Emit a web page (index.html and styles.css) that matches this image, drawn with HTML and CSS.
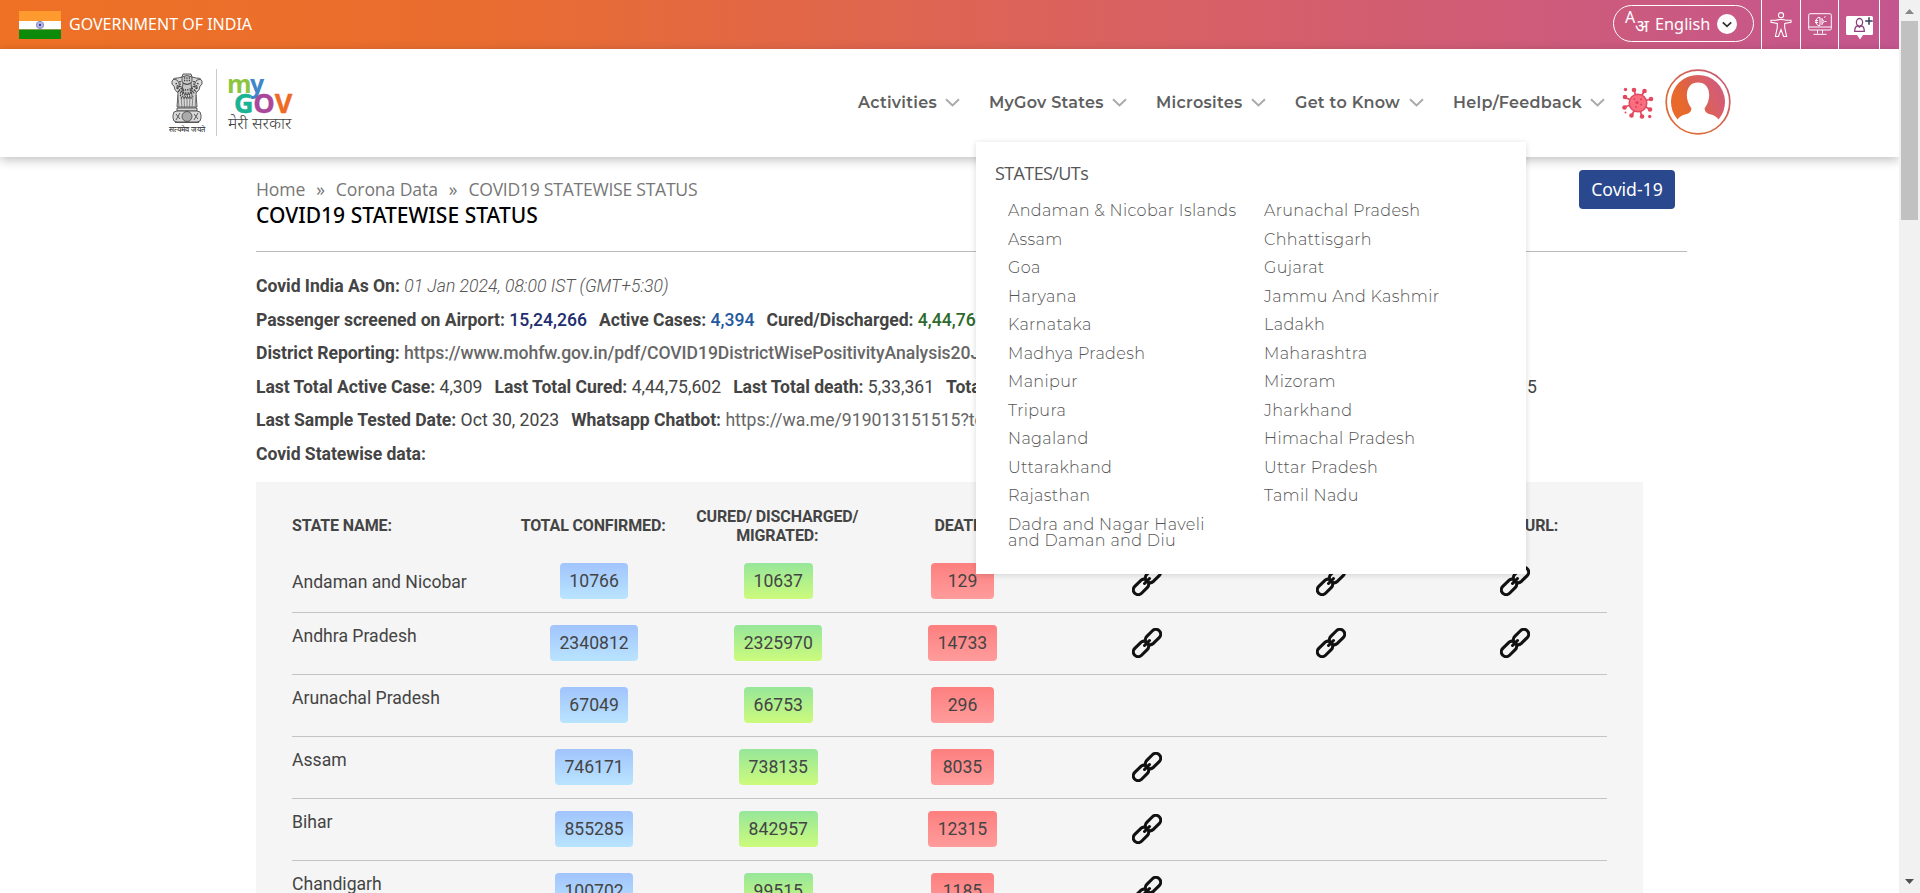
FILE: index.html
```html
<!DOCTYPE html>
<html lang="en">
<head>
<meta charset="utf-8">
<title>COVID19 Statewise Status | MyGov.in</title>
<link rel="stylesheet" href="styles.css">
</head>
<body>
<svg class="defs" aria-hidden="true">
  <defs>
    <linearGradient id="brand" x1="0" y1="0.6" x2="1" y2="0.2"><stop offset="0.15" stop-color="#e8692b"/><stop offset="0.4" stop-color="#dc6148"/><stop offset="0.65" stop-color="#d95f66"/><stop offset="1" stop-color="#cf5a7e"/></linearGradient>
    <linearGradient id="ring" x1="0" y1="1" x2="1" y2="0"><stop offset="0.3" stop-color="#dd6b38"/><stop offset="1" stop-color="#c1567c"/></linearGradient>
  </defs>
  <symbol id="chev" viewBox="0 0 15 9"><path d="M1 1.2l6.5 6.2L14 1.2" fill="none" stroke="#aaa" stroke-width="2"/></symbol>
  <symbol id="link" viewBox="0 0 30 30">
    <g fill="none" stroke="#111" stroke-width="3.100" stroke-linecap="round" transform="rotate(-45 15 15)">
      <path d="M14.200 18.200 Q12.800 19.800 10.500 19.800 H2.500 A4.800 4.800 0 0 1 2.500 10.200 H10.500 Q15.300 10.600 15.300 15 L11.500 15"/>
      <path d="M15.800 11.800 Q17.200 10.200 19.500 10.200 H27.500 A4.800 4.800 0 0 1 27.500 19.800 H19.500 Q14.700 19.400 14.700 15 L18.500 15"/>
    </g>
  </symbol>
</svg>
<div class="window">
  <div class="page">
    <div class="topbar">
      <svg class="flag" viewBox="0 0 42 28" preserveAspectRatio="none"><path fill="#ff9a2e" d="M0 0h42v10H0z"/><path fill="#fff" d="M0 10h42v8.500H0z"/><path fill="#0d8a0a" d="M0 18.500h42V28H0z"/><circle cx="21" cy="14" r="3.600" fill="#b9b9e4" stroke="#8585c8"/><circle cx="21" cy="14" r="1.200" fill="#3c3c9c"/></svg>
      <span class="gov">GOVERNMENT OF INDIA</span>
      <div class="tools">
        <div class="lang"><span class="lang-a">A</span><span class="lang-h">अ</span><span class="lang-t">English</span>
          <svg class="lang-c" viewBox="0 0 20 20"><circle cx="10" cy="10" r="10" fill="#fff"/><path d="M5.800 8.300l4.200 4 4.200-4" fill="none" stroke="#333" stroke-width="1.800"/></svg></div>
        <div class="tool t1"><svg width="22" height="26" viewBox="0 0 22 26" fill="none" stroke="#fff" stroke-width="1.100"><circle cx="11" cy="3.200" r="2.600"/><path d="M1 8.300h4.500q5.500-1.500 11 0H21v1.900l-6.300 1.300v4l1.900 9h-3L11 17.500l-2.600 7h-3l1.900-9v-4L1 10.200z"/></svg></div>
        <div class="tool t2"><svg width="24" height="23" viewBox="0 0 24 23" fill="none" stroke="#fff" stroke-width="1"><rect x=".7" y=".7" width="22.600" height="16.300" rx="1.500"/><path d="M1 14h22M9.500 17v3.500M14.500 17v3.500M5.500 21.300h13M7 7.500h3M7 9.500h3M10 4.500h2v8h-2l-2-2.500V7zM14 5v7M14 6.500q4 2 0 4M16 4.500l1.500-1M16.500 8.500h2"/></svg></div>
        <div class="tool t3"><svg width="28" height="24" viewBox="0 0 28 24"><path fill="#fff" d="M1.500 0h24q1.500 0 1.500 1.500v16q0 1.500-1.500 1.500H17l-3 4.500-3-4.500H1.500Q0 19 0 17.500v-16Q0 0 1.500 0z"/><g fill="none" stroke="#8d3f7c" stroke-width="1.300"><ellipse cx="13.500" cy="6.300" rx="3.100" ry="3.800"/><path d="M8.700 15.300q0-5 3-5.500l1.800 1.300 1.800-1.300q3 .5 3 5.500z"/></g><path d="M23 1.200v7.500M19.200 5h7.500" stroke="#333e55" stroke-width="1.500"/></svg></div>
        <div class="tool t4"></div>
      </div>
    </div>
    <header class="header">
      <div class="logos">
        <div class="emblem">
          <svg width="36" height="52" viewBox="0 0 36 52">
            <g fill="#d9d9d9" stroke="#4b4b4b" stroke-width=".9">
              <path d="M9 20q-4-3-4-7-3-1-2-5 2-4 6-3l4-1 1-3h8l1 3 4 1q4-1 6 3 1 4-2 5 0 4-4 7l1 14H8z"/>
              <path d="M13 4q5-3 10 0v5q-5 5-10 0zM14 10q4 3 8 0l1 9q-5 5-10 0z" fill="#c8c8c8"/>
              <path d="M4 6q5 0 6 4t-3 5M32 6q-5 0-6 4t3 5" fill="none"/>
              <path d="M9 22l1 13M12 23l1 12M15 24l.5 11M18 25v10M21 24l-.5 11M24 23l-1 12M27 22l-1 13" stroke="#777"/>
              <path d="M8 35h20v3H8z"/>
              <rect x="4" y="38" width="28" height="11" rx="4"/><circle cx="18" cy="43.500" r="5" fill="#aaa"/><path d="M7 41l4 5M11 40l-4 7M25 41l4 5M29 40l-4 7M6 49.500h24"/>
            </g>
            <g stroke="#444" stroke-width="1.700" stroke-dasharray="1.200 1.200" fill="none"><path d="M7 10q3 7 5 9M29 10q-3 7-5 9M10 13q6 8 16 0M9 18q9 8 18 0M11 8q0 7 4 10M25 8q0 7-4 10M11 22q7 4 14 0M15 5h6M15 7.500h6M8 15q10 10 20 0M12 25h12"/></g>
          </svg>
          <span class="motto">सत्यमेव जयते</span>
        </div>
        <div class="mygov">
          <div class="my"><span class="c1">m</span><span class="c2">y</span></div>
          <div class="gv"><span class="c3">G</span><span class="c4">O</span><span class="c5">V</span></div>
          <div class="hi">मेरी सरकार</div>
        </div>
      </div>
      <nav class="nav">
        <a class="n1"><span>Activities</span><svg><use href="#chev"/></svg></a>
        <a class="n2"><span>MyGov States</span><svg><use href="#chev"/></svg></a>
        <a class="n3"><span>Microsites</span><svg><use href="#chev"/></svg></a>
        <a class="n4"><span>Get to Know</span><svg><use href="#chev"/></svg></a>
        <a class="n5"><span>Help/Feedback</span><svg><use href="#chev"/></svg></a>
      </nav>
      <svg class="virus" viewBox="0 0 32 32">
        <g stroke="#e2495f" stroke-width="1.700"><path d="M16 16L12 3M16 16L22.500 3.500M16 16L29 12M16 16L28.500 22.500M16 16L20 30M16 16L9.500 29M16 16L2 20M16 16L3 10.500"/></g>
        <g fill="#e2495f"><circle cx="12" cy="3" r="2.300"/><circle cx="22.500" cy="4" r="2.300"/><circle cx="29" cy="12" r="2.300"/><circle cx="28" cy="22.500" r="2.300"/><circle cx="20" cy="29.500" r="2.300"/><circle cx="9.500" cy="28.500" r="2.300"/><circle cx="2.500" cy="20.500" r="2.300"/><circle cx="3" cy="10" r="2.300"/><circle cx="3.500" cy="2.500" r="1.700"/><circle cx="27.700" cy="29.500" r="1.700"/><circle cx="3.500" cy="25.500" r="1"/></g>
        <circle cx="16" cy="16" r="8.800" fill="#f96f7f" stroke="#e2495f" stroke-width="1.500"/>
        <g fill="#dc4259"><circle cx="15" cy="15.500" r="1.600"/><circle cx="19" cy="12.500" r="1"/><circle cx="19" cy="17.500" r="1"/><circle cx="14" cy="20" r=".9"/><circle cx="12.500" cy="12" r=".9"/></g>
      </svg>
      <svg class="avatar" viewBox="0 0 66 66"><circle cx="33" cy="33" r="31.800" fill="#fff" stroke="url(#ring)" stroke-width="1.700"/><path fill="url(#brand)" d="M12.500 50.500A27 27 0 1 1 53.500 50.500Q51 46.500 45 45.200Q40 44 39.500 39.500Q44.200 33 44.200 26Q43.500 13.500 33 13.500T21.800 26Q21.800 33 26.500 39.500Q26 44 21 45.200Q15 46.500 12.500 50.500Z"/></svg>
      <div class="menu">
        <h3>STATES/UTs</h3>
        <div class="cols">
          <ul><li>Andaman &amp; Nicobar Islands</li><li>Assam</li><li>Goa</li><li>Haryana</li><li>Karnataka</li><li>Madhya Pradesh</li><li>Manipur</li><li>Tripura</li><li>Nagaland</li><li>Uttarakhand</li><li>Rajasthan</li><li>Dadra and Nagar Haveli<br>and Daman and Diu</li></ul>
          <ul><li>Arunachal Pradesh</li><li>Chhattisgarh</li><li>Gujarat</li><li>Jammu And Kashmir</li><li>Ladakh</li><li>Maharashtra</li><li>Mizoram</li><li>Jharkhand</li><li>Himachal Pradesh</li><li>Uttar Pradesh</li><li>Tamil Nadu</li></ul>
        </div>
      </div>
    </header>
    <main class="main">
      <div class="head">
        <div>
          <div class="crumbs"><span>Home</span><i>»</i><span>Corona Data</span><i>»</i><span class="here">COVID19 STATEWISE STATUS</span></div>
          <h1>COVID19 STATEWISE STATUS</h1>
        </div>
        <a class="btn">Covid-19</a>
      </div>
      <div class="info">
        <p><b>Covid India As On:</b> <em>01 Jan 2024, 08:00 IST (GMT+5:30)</em></p>
        <p><span><b>Passenger screened on Airport:</b> <strong class="navy">15,24,266</strong></span><span><b>Active Cases:</b> <strong class="blue">4,394</strong></span><span><b>Cured/Discharged:</b> <strong class="green">4,44,76,150</strong></span></p>
        <p><b>District Reporting:</b> <a class="med">https://www.mohfw.gov.in/pdf/COVID19DistrictWisePositivityAnalysis20July.xlsx</a></p>
        <p class="last"><span><b>Last Total Active Case:</b> 4,309</span><span><b>Last Total Cured:</b> 4,44,75,602</span><span><b>Last Total death:</b> 5,33,361</span><span><b>Total Vaccination:</b></span><span class="end">5</span></p>
        <p><span><b>Last Sample Tested Date:</b> Oct 30, 2023</span><span><b>Whatsapp Chatbot:</b> <a>https://wa.me/919013151515?text=Hi</a></span></p>
        <p><b>Covid Statewise data:</b></p>
      </div>
      <section class="panel">
        <div class="row thead"><div>STATE NAME:</div><div>TOTAL CONFIRMED:</div><div>CURED/ DISCHARGED/ MIGRATED:</div><div>DEATH:</div><div></div><div></div><div><span class="url">URL:</span></div></div>
        <div class="row first"><div>Andaman and Nicobar</div><div><span class="p b">10766</span></div><div><span class="p g">10637</span></div><div><span class="p r">129</span></div><div><svg><use href="#link"/></svg></div><div><svg><use href="#link"/></svg></div><div><svg><use href="#link"/></svg></div></div>
        <div class="row"><div>Andhra Pradesh</div><div><span class="p b">2340812</span></div><div><span class="p g">2325970</span></div><div><span class="p r">14733</span></div><div><svg><use href="#link"/></svg></div><div><svg><use href="#link"/></svg></div><div><svg><use href="#link"/></svg></div></div>
        <div class="row"><div>Arunachal Pradesh</div><div><span class="p b">67049</span></div><div><span class="p g">66753</span></div><div><span class="p r">296</span></div></div>
        <div class="row"><div>Assam</div><div><span class="p b">746171</span></div><div><span class="p g">738135</span></div><div><span class="p r">8035</span></div><div><svg><use href="#link"/></svg></div></div>
        <div class="row"><div>Bihar</div><div><span class="p b">855285</span></div><div><span class="p g">842957</span></div><div><span class="p r">12315</span></div><div><svg><use href="#link"/></svg></div></div>
        <div class="row"><div>Chandigarh</div><div><span class="p b">100702</span></div><div><span class="p g">99515</span></div><div><span class="p r">1185</span></div><div><svg><use href="#link"/></svg></div></div>
      </section>
    </main>
  </div>
  <div class="scroll"><svg width="9" height="5" viewBox="0 0 9 5"><path fill="#888" d="M0 5L4.500 0 9 5z"/></svg><div class="thumb"></div><svg class="down" width="9" height="5" viewBox="0 0 9 5"><path fill="#505050" d="M0 0h9L4.500 5z"/></svg></div>
</div>
</body>
</html>
```

FILE: styles.css
```css
* { box-sizing: border-box; }
body { margin: 0; height: 893px; overflow: hidden; background: #fff; font-family: Roboto, "Liberation Sans", sans-serif; color: #444; }
h1, h3, p, ul { margin: 0; padding: 0; font-weight: 400; }
.defs { position: absolute; width: 0; height: 0; }
.window { display: flex; height: 893px; overflow: hidden; }
.page { width: 1899px; height: 893px; overflow: hidden; }

.topbar { height: 49px; display: flex; align-items: center; padding-left: 19px; background: linear-gradient(90deg, #ee7125 0%, #e96d2f 25%, #d96162 60%, #c4568f 100%); color: #fff; font-family: "Noto Sans", "Open Sans", sans-serif; }
.flag { width: 42px; height: 28px; margin-right: 8px; }
.gov { font-size: 16px; white-space: nowrap; padding-bottom: 2px; }
.tools { margin-left: auto; display: flex; align-items: center; height: 49px; }
.lang { display: flex; align-items: center; width: 141px; height: 37px; margin: 0 7px 2px 0; padding-left: 11px; border: 1px solid #fff; border-radius: 19px; }
.lang-a { font-size: 16px; line-height: 16px; width: 10px; margin-top: -14px; }
.lang-h { font-size: 18px; line-height: 20px; width: 15px; margin-top: 2px; }
.lang-t { font-size: 16.300px; width: 53px; margin-left: 5px; }
.lang-c { width: 20px; height: 20px; margin-left: 9px; }
.tool { height: 49px; border-left: 1px solid #fff; display: flex; align-items: center; justify-content: center; }
.t1 { width: 39px; } .t2 { width: 38px; } .t3 { width: 41px; padding: 6px 0 0 1px; } .t4 { width: 20px; }

.header { position: relative; z-index: 2; height: 108px; display: flex; background: #fff; box-shadow: 0 3px 10px rgba(0,0,0,.25); }
.logos { width: 858px; padding: 20px 0 0 169px; display: flex; }
.emblem { width: 48px; height: 67px; border-right: 1px solid #ccc; padding-top: 4px; display: flex; flex-direction: column; }
.motto { font-size: 7.500px; line-height: 9px; color: #222; white-space: nowrap; margin-top: 0; }
.mygov { padding: 4px 0 0 10px; font-family: "Open Sans", "Noto Sans", sans-serif; font-weight: 700; }
.my { font-size: 25px; line-height: 20px; letter-spacing: -1.5px; height: 19px; }
.gv { font-size: 27px; line-height: 22px; height: 22px; padding-left: 7px; letter-spacing: -.2px; -webkit-text-stroke: .4px; }
.hi { font-size: 16.500px; line-height: 17px; font-weight: 300; color: #444; white-space: nowrap; padding-left: 1px; }
.c1 { color: #8cc540; } .c2 { color: #3f87c9; } .c3 { color: #1ab394; } .c4 { color: #a9479b; } .c5 { color: #ee6a25; }
.nav { display: flex; width: 764px; height: 106px; align-items: center; font-family: Montserrat, Inter, sans-serif; font-weight: 600; font-size: 16px; letter-spacing: .28px; color: #5f5f5f; }
.nav a { display: flex; align-items: center; justify-content: space-between; white-space: nowrap; margin-right: 29px; flex: none; }
.nav svg { width: 15px; height: 9px; }
.n1 { width: 102px; } .n2 { width: 138px; } .n3 { width: 110px; } .n4 { width: 129px; } .n5 { width: 152px; }
.virus { width: 32px; height: 32px; margin-top: 38px; }
.avatar { width: 66px; height: 66px; margin: 20px 0 0 11px; }

.menu { position: absolute; left: 976px; top: 93px; width: 550px; height: 432px; padding: 18px 19px; background: #fff; box-shadow: 0 1px 6px rgba(0,0,0,.15); }
.menu h3 { font: 400 18px/26px "Open Sans", sans-serif; letter-spacing: -.6px; color: #555; }
.cols { display: flex; padding: 17px 0 0 13px; }
.cols ul { list-style: none; flex: none; width: 256px; font: 300 16px/16px Montserrat, Inter, sans-serif; letter-spacing: .36px; color: #555; white-space: nowrap; }
.cols li { padding-bottom: 12.560px; }

.main { padding: 13px 0 0 256px; }
.head { display: flex; justify-content: space-between; width: 1431px; height: 82px; border-bottom: 1px solid #bbb; padding-right: 12px; font-family: "Open Sans", "Noto Sans", sans-serif; }
.crumbs { display: flex; padding-top: 7px; font-size: 17.600px; line-height: 24px; color: #777; white-space: nowrap; letter-spacing: -.1px; }
.crumbs i { font-style: normal; width: 30.500px; text-align: center; }
.crumbs .here { letter-spacing: -.27px; }
.head h1 { font: 500 21px/28px "Noto Sans", sans-serif; color: #000; white-space: nowrap; letter-spacing: .04px; }
.btn { width: 96px; height: 39px; border-radius: 4px; background: #2a488d; color: #fff; font: 400 17.600px/38px "Noto Sans", sans-serif; text-align: center; }
.info { padding-top: 18px; height: 230px; font-size: 17.600px; line-height: 33.500px; white-space: nowrap; }
.info p { height: 33.500px; }
.info b { font-weight: 700; letter-spacing: -.05px; }
.info strong { font-weight: 500; }
.info p > span { margin-right: 12px; }
.info em { font-weight: 300; color: #555; }
.info a { color: #666; }
.info .med { font-weight: 500; letter-spacing: -.05px; }
.navy { color: #212e6e; } .blue { color: #2359a0; } .green { color: #2d6a2c; }
.info .last { display: flex; width: 1281px; gap: 0; }
.info .last > span { white-space: pre; }
.info .last .end { margin: 0 0 0 auto; }

.panel { width: 1387px; height: 420px; padding: 18px 36px 0; background: #f5f5f5; font-size: 17.600px; }
.row { display: grid; grid-template-columns: 210px repeat(6, 184.200px); width: 1315px; height: 62px; padding-bottom: 1px; align-items: center; justify-items: center; border-bottom: 1px solid #c4c4c4; }
.row > :first-child { justify-self: start; margin-top: -14px; }
.row svg { width: 30px; height: 30px; display: block; }
.row.first > :first-child { margin-top: 1px; }
.row.thead { grid-template-columns: 209px repeat(6, 184.200px); height: 51px; padding: 0; border: 0; font-size: 16px; letter-spacing: -.14px; font-weight: 700; line-height: 19px; text-align: center; }
.row.thead > :first-child { margin: 0; }
.url { display: block; padding-left: 55px; }
.p { display: block; height: 36px; padding: 0 9.600px; border-radius: 4px; line-height: 36px; text-align: center; }
.b { background: linear-gradient(#a1c4fd, #b9e4fe); }
.g { background: linear-gradient(#96e69a, #ccfb7c); }
.r { min-width: 63px; background: linear-gradient(#fd7f7f, #ff9c9c); }

.scroll { width: 21px; background: #f1f1f1; display: flex; flex-direction: column; align-items: center; padding: 9px 0; }
.thumb { width: 17px; height: 199px; margin-top: 7px; background: #c1c1c1; }
.down { margin-top: auto; }
```
